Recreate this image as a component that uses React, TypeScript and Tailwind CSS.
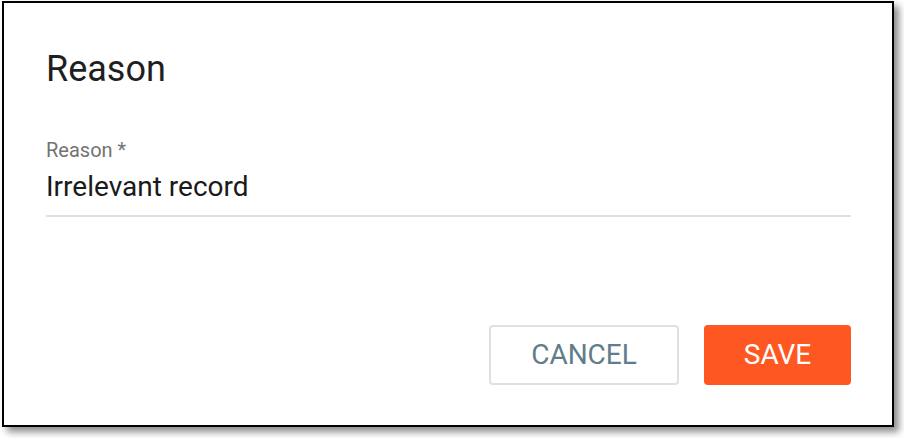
import React from 'react'

export default function App() {
  return (
    <div className="w-[904px] h-[438px] bg-white font-['Roboto',sans-serif]">
      <div className="ml-[2px] pt-[1px]">
        <div className="w-[892px] h-[426px] border-2 border-black bg-white shadow-[5px_5px_7px_rgba(0,0,0,0.45)] flex flex-col pl-[42px] pr-[41px] pt-[46px] pb-[40px]">
          {/* Title */}
          <h2 className="text-[36px] leading-[40px] text-[#1f1f1f] font-normal">Reason</h2>

          {/* Field */}
          <div className="mt-[49px] border-b-2 border-[#e0e0e0] pb-[12px]">
            <label className="block text-[20px] leading-[24px] text-[#737373]">Reason *</label>
            <div className="mt-[9px] text-[28px] leading-[32px] text-[#1a1a1a]">Irrelevant record</div>
          </div>

          {/* Actions */}
          <div className="mt-auto flex justify-end gap-[25px]">
            <button className="w-[190px] h-[60px] rounded-[4px] border-2 border-[#e0e0e0] bg-white text-[28px] text-[#5f7d8b]">
              CANCEL
            </button>
            <button className="w-[147px] h-[60px] rounded-[4px] bg-[#ff5722] text-[28px] text-white">
              SAVE
            </button>
          </div>
        </div>
      </div>
    </div>
  )
}
